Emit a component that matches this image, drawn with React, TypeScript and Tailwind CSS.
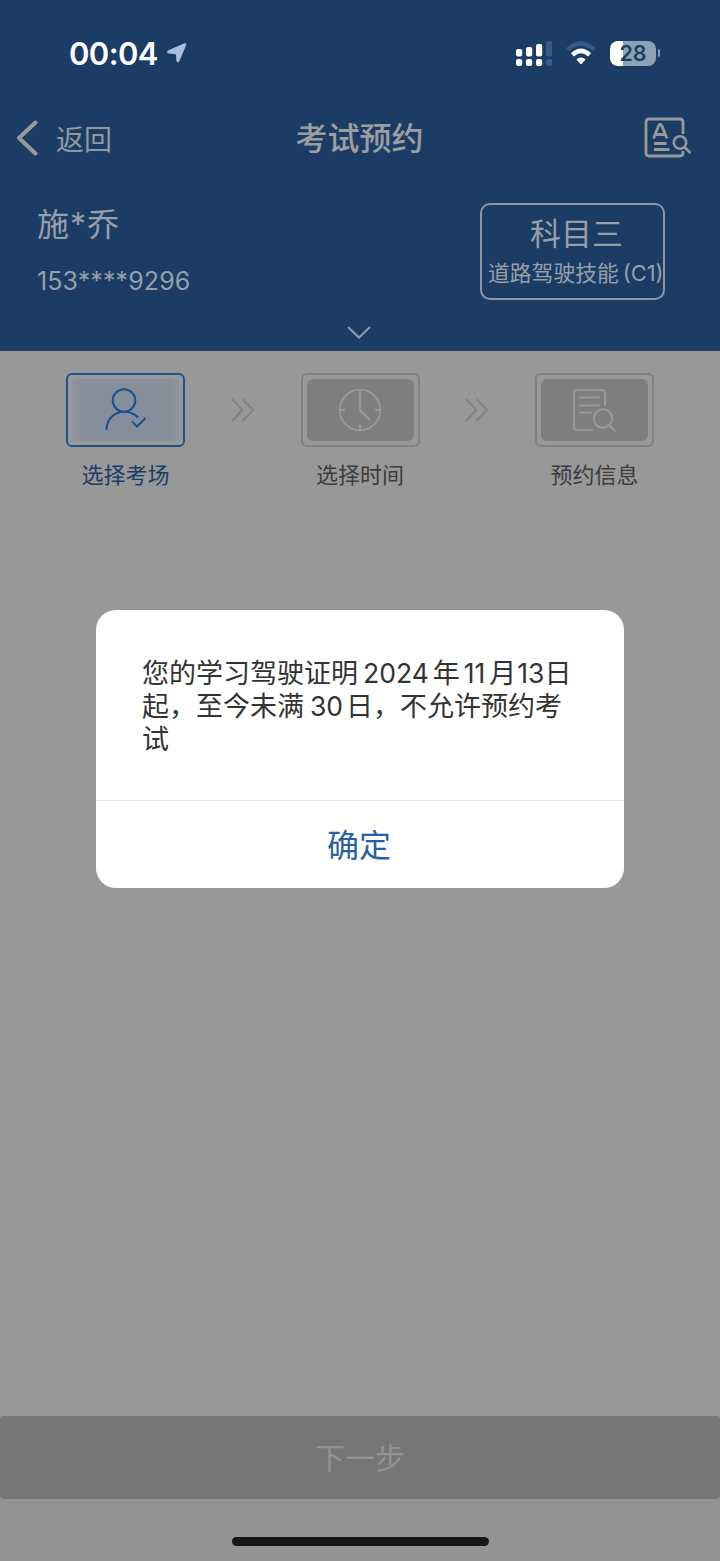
import type { ReactNode } from "react";
import clsx from "clsx";

type Step = {
  label: string;
  active?: boolean;
  icon: ReactNode;
};

function UserCheckIcon() {
  return (
    <svg className="-ml-0.5 -mt-0.5" width="44" height="46" viewBox="0 0 44 46" fill="none" stroke="#1b508f" strokeWidth="2">
      <circle cx="21" cy="14.5" r="11.3" />
      <path d="M3.500 44C3.500 33 11.500 25.800 21 25.800C26.500 25.800 31.500 28 35 31.500" />
      <path d="M29 35.500L34 40.500L42.500 32" />
    </svg>
  );
}

function ClockIcon() {
  return (
    <svg width="44" height="44" viewBox="0 0 44 44" fill="none" stroke="#999999" strokeWidth="1.8">
      <circle cx="22" cy="22" r="20.3" />
      <path d="M22 2V22.5L32 32M22 37V42M2 22H7M37 22H42" />
    </svg>
  );
}

function DocumentSearchIcon() {
  return (
    <svg className="-ml-0.5" width="44" height="44" viewBox="0 0 44 44" fill="none" stroke="#999999" strokeWidth="2" strokeLinecap="round">
      <path d="M33 17V5Q33 2 30 2H5Q2 2 2 5V39Q2 42 5 42H20" />
      <path d="M8 9.5H27M8 17.5H27M8 24.5H19" />
      <circle cx="31" cy="30.5" r="9.3" />
      <path d="M37.5 37.5L43 43" />
    </svg>
  );
}

function DoubleChevron() {
  return (
    <svg className="mt-[25px]" width="24" height="24" viewBox="0 0 24 24" fill="none" stroke="#838383" strokeWidth="2">
      <path d="M1 1L11.500 12L1 23" />
      <path d="M11.5 1L22 12L11.5 23" />
    </svg>
  );
}

const steps: Step[] = [
  { label: "选择考场", active: true, icon: <UserCheckIcon /> },
  { label: "选择时间", icon: <ClockIcon /> },
  { label: "预约信息", icon: <DocumentSearchIcon /> },
];

function StatusBar() {
  return (
    <div className="flex h-[106px] items-center justify-between pl-[69px] pr-16">
      <div className="flex items-center">
        <span className="w-[89px] whitespace-nowrap text-[31px] font-semibold leading-none tracking-[-0.6px] text-white">00:04</span>
        <svg className="ml-2" width="22" height="22" viewBox="0 0 22 22" fill="#a9bddd">
          <path d="M18 1.600Q21.200 .4 20 3.400L13.600 18.800Q11.800 22 10.400 18.800L9.900 12.300L2.800 11.600Q-.6 10.200 2.400 8.200Z" />
        </svg>
      </div>

      <div className="flex items-center">
        {/* Dual sim signal */}
        <svg width="36" height="27" viewBox="0 0 36 27" fill="#ffffff">
          <rect x="0" y="9" width="6.2" height="7.5" rx="2" />
          <rect x="10" y="7" width="6.2" height="9.5" rx="2" />
          <rect x="20" y="4" width="6.2" height="12.5" rx="2" />
          <rect x="30" y="1" width="6.2" height="15.5" rx="2" fill="#375a87" />
          <rect x="0" y="19" width="6.2" height="7" rx="2" />
          <rect x="10" y="19" width="6.2" height="7" rx="2" />
          <rect x="20" y="19" width="6.2" height="7" rx="2" />
          <rect x="30" y="19" width="6.2" height="7" rx="2" fill="#375a87" />
        </svg>
        <svg className="ml-3.5" width="30" height="24" viewBox="0 0 30 24" fill="none">
          <path d="M1.5 8.8Q15-3.8 28.5 8.8" stroke="#375a87" strokeWidth="4.2" />
          <path d="M6.4 13.8Q15 6 23.6 13.8" stroke="#ffffff" strokeWidth="4.4" />
          <path d="M10.4 18.600Q15 14.600 19.600 18.600L16 22.400Q15 23.400 14 22.400Z" fill="#ffffff" />
        </svg>
        <div className="ml-3.5 flex h-[25px] w-[46px] items-center justify-center rounded-lg bg-[linear-gradient(90deg,#ffffff_28%,#8fa1b5_28%)]">
          <span className="pt-0.5 text-[21.5px] font-semibold leading-none text-[#1b3c65]">28</span>
        </div>
        <div className="ml-0.5 h-2 w-[2px] -mr-1 rounded-r-full bg-[#8fa1b5]" />
      </div>
    </div>
  );
}

function NavBar() {
  return (
    <div className="grid h-16 grid-cols-3 items-center pl-4 pr-[29px]">
      <div className="flex items-center">
        <svg width="23" height="36" viewBox="0 0 23 36" fill="none" stroke="#9a9a9a" strokeWidth="4" strokeLinecap="round" strokeLinejoin="round">
          <path d="M19.5 2.5L3 18L19.5 33.5" />
        </svg>
        <span className="ml-[17px] mt-1 text-[28px] leading-none text-[#9298a0]">返回</span>
      </div>
      <h1 className="ml-3 mt-0.5 text-center text-[32px] font-medium leading-none text-[#9c9ea2]">考试预约</h1>
      <svg className="justify-self-end" width="48" height="42" viewBox="0 0 48 42" fill="none" stroke="#999999" strokeWidth="2.8">
        <path d="M40 17V5Q40 2 37 2H6Q3 2 3 5V36Q3 39 6 39H37Q40 39 40 36V34" />
        <path d="M10.500 21.500L15.500 9Q17.200 5.200 18.900 9L24 21.500M12.500 17.500H22" strokeWidth="2.800" />
        <path d="M11 26.500H23.500M11 32.500H26.500" />
        <circle cx="37" cy="25.500" r="6.200" strokeWidth="2.500" />
        <path d="M41.500 30L47.500 36" strokeWidth="2.500" />
      </svg>
    </div>
  );
}

function Header() {
  return (
    <header className="flex h-[351px] flex-col bg-[#1b3c65]">
      <StatusBar />
      <NavBar />
      <div className="flex justify-between pl-[37px] pr-[55px] pt-[33px] text-[#999fa8]">
        <div className="pt-[6px]">
          <p className="text-[32px] leading-8">施<span className="mx-px">*</span>乔</p>
          <p className="mt-6 text-[25px] leading-8 tracking-[0.1px]">153****9296</p>
        </div>
        <div className="h-[97px] w-[185px] rounded-[10px] border-2 border-[#8b98a8] pt-[11px] text-center">
          <p className="pl-2 text-[31px] leading-9">科目三</p>
          <p className="mt-[5px] flex whitespace-nowrap pl-1.5 text-[21.8px] leading-8">
            道路驾驶技能<span className="ml-1">(C1)</span>
          </p>
        </div>
      </div>
      <svg className="mx-auto mt-[25px] -translate-x-px" width="24" height="14" viewBox="0 0 24 14" fill="none" stroke="#929ba7" strokeWidth="2">
        <path d="M1 2L12 12.500L23 2" />
      </svg>
    </header>
  );
}

function StepTile({ label, active, icon }: Step) {
  return (
    <div className="flex w-[119px] flex-col items-center">
      <div
        className={clsx(
          "h-[74px] w-full rounded-md border-2 p-[4px]",
          active ? "border-[#1b508f]" : "border-[#808080]"
        )}
      >
        <div
          className={clsx(
            "flex h-full items-center justify-center",
            active
              ? "rounded-sm bg-[linear-gradient(90deg,#929599,#858f9b_8%,#858f9b_92%,#929599)]"
              : "rounded-md bg-[#7e7e7e]"
          )}
        >
          {icon}
        </div>
      </div>
      <span className={clsx("mt-3 text-[22px] leading-8", active ? "text-[#1b3c65]" : "text-[#3c3c3c]")}>
        {label}
      </span>
    </div>
  );
}

function Dialog() {
  return (
    <div className="absolute left-24 top-[610px] flex h-[278px] w-[528px] flex-col rounded-[20px] bg-white">
      <div className="h-[191px] whitespace-nowrap border-b border-[#e2e2e2] pl-[46px] pt-[47px] text-[27px] leading-[33px] text-[#333333]">
        <p>
          您的学习驾驶证明<span className="ml-[5px] mr-1 text-[26.5px]">2024</span>年
          <span className="ml-1 mr-1 text-[26.5px]">11</span>月
          <span className="ml-px text-[26.5px]">13</span>日
        </p>
        <p>
          起，至今未满<span className="ml-1.5 mr-[3px] text-[26.5px]">30</span>日，不允许预约考
        </p>
        <p>试</p>
      </div>
      <button className="flex-1 pr-0.5 pt-[3px] text-[32px] leading-none text-[#2860a4]">确定</button>
    </div>
  );
}

export default function App() {
  return (
    <div className="relative flex h-[1561px] w-[720px] flex-col overflow-hidden bg-[#989898] font-['Inter','Noto_Sans_CJK_SC',sans-serif]">
      <Header />

      <main className="flex-1">
        <div className="flex items-start justify-between px-[66px] pt-[22px]">
          <StepTile {...steps[0]} />
          <DoubleChevron />
          <StepTile {...steps[1]} />
          <DoubleChevron />
          <StepTile {...steps[2]} />
        </div>
      </main>

      <footer className="h-[145px] bg-[#949494]">
        <button className="block h-[83px] w-full rounded bg-[#767676] pt-0.5 text-[30px] text-[#929292]">下一步</button>
        <div className="mx-auto mt-[38px] h-[9px] w-[257px] rounded-full bg-[#171717]" />
      </footer>

      <Dialog />
    </div>
  );
}
